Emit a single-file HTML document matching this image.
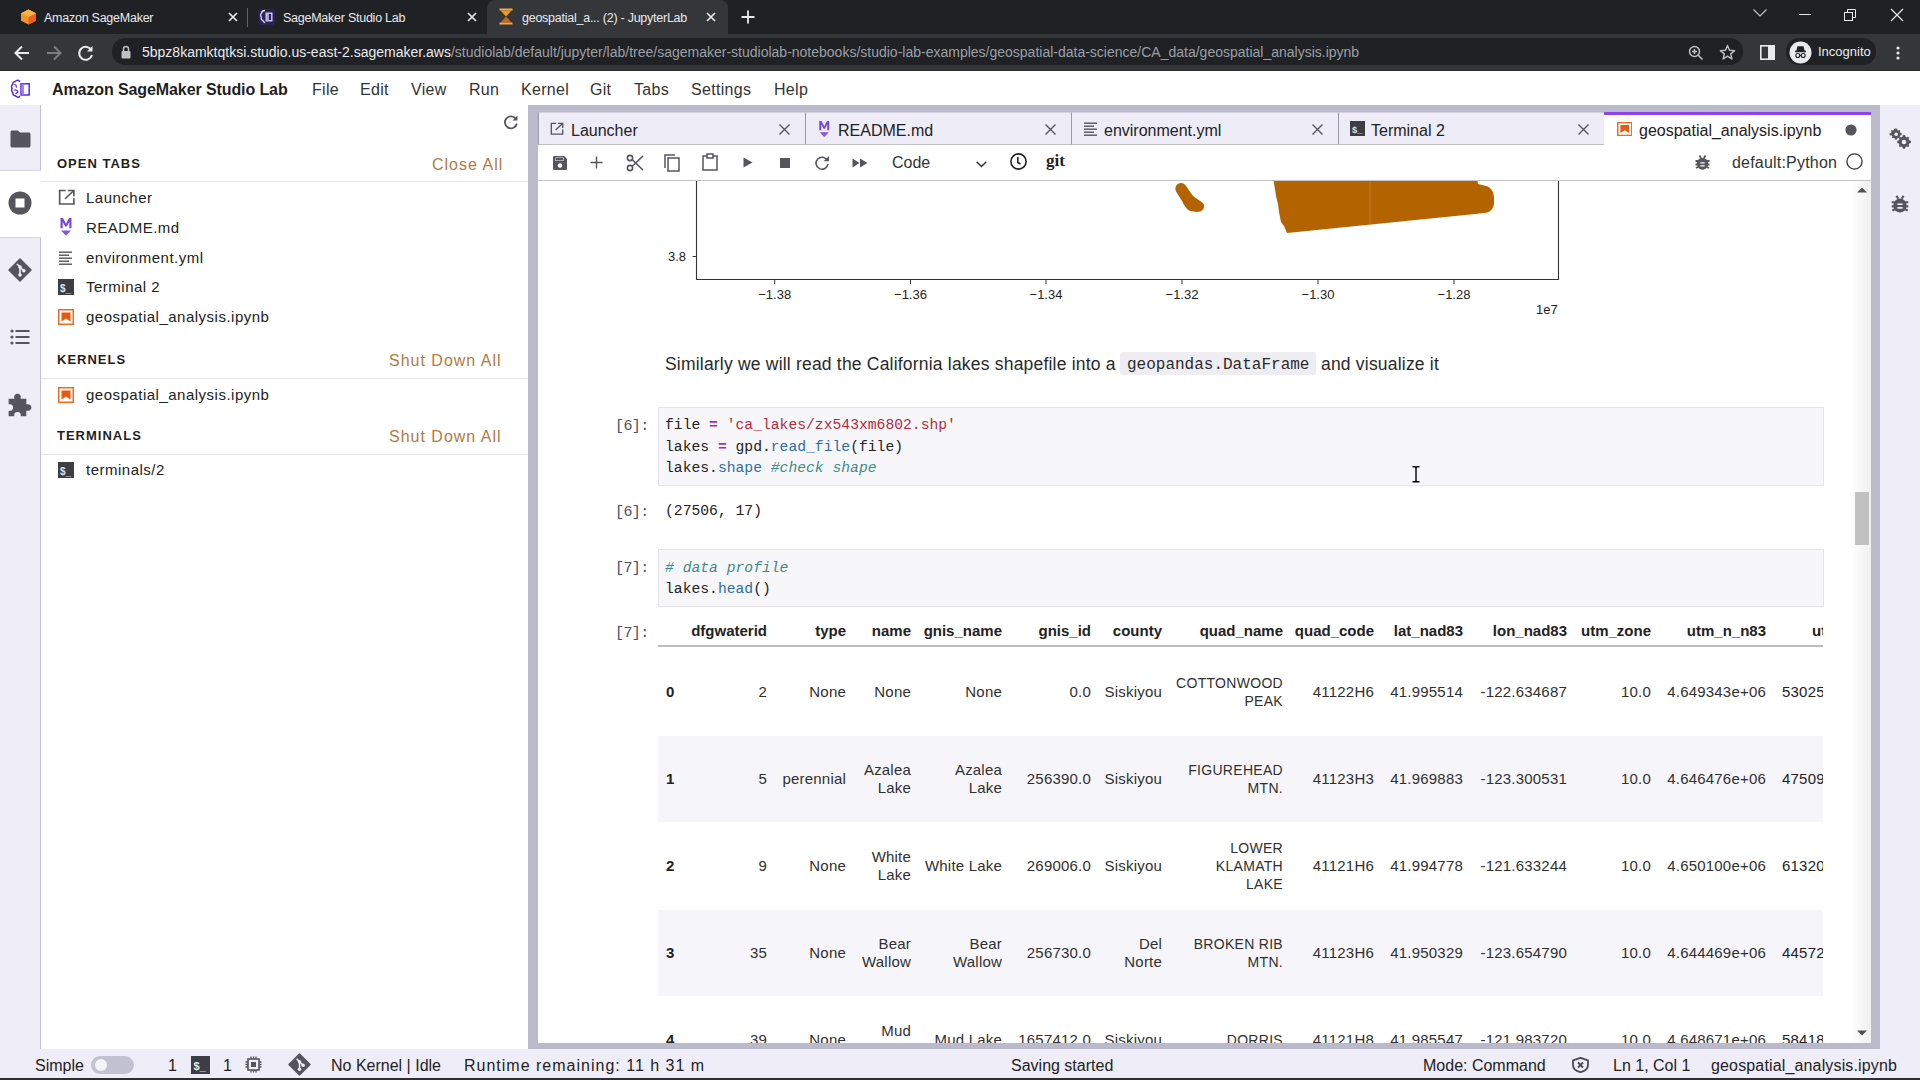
<!DOCTYPE html>
<html><head><meta charset="utf-8">
<style>
*{box-sizing:border-box;margin:0;padding:0}
html,body{width:1920px;height:1080px;overflow:hidden;background:#fff;font-family:"Liberation Sans",sans-serif;position:relative}
.a{position:absolute}
svg{display:block}
.mono{font-family:"Liberation Mono",monospace}
#tabstrip{left:0;top:0;width:1920px;height:34px;background:#202124}
#toolbar{left:0;top:34px;width:1920px;height:37px;background:#35363a;border-bottom:1.5px solid #29292c}
.ctab{top:1.5px;height:33px;color:#e8eaed;font-size:12.5px;letter-spacing:-0.25px;line-height:33px;white-space:nowrap}
#menubar{left:0;top:71px;width:1920px;height:34.5px;background:#fff;border-bottom:1px solid #b0b0b0}
.menu{top:0.8px;height:35px;line-height:36px;font-size:16px;color:#333;letter-spacing:0.3px}
#iconbar{left:0;top:105px;width:41px;height:944px;background:#efedf8;border-right:1px solid #c2c0ca}
#sidepanel{left:41px;top:105px;width:487px;height:943px;background:#fff}
#splitter{left:528px;top:105px;width:10px;height:943px;background:#bab9cc}
#mainarea{left:538px;top:105px;width:1340px;height:943px;background:#fff}
#rightbar{left:1878px;top:105px;width:42px;height:943px;background:#efedf8}
#statusbar{left:0;top:1048px;width:1920px;height:30px;background:#efedf8}
#bottomline{left:0;top:1078px;width:1920px;height:2px;background:#2e2e30}
</style></head><body>
<div id="tabstrip" class="a">
 <div class="a" style="left:20px;top:9px;width:16px;height:16px;">
  <svg width="17" height="16" viewBox="0 0 17 16"><path d="M8.5 0.5 L16 4.3 L16 11.7 L8.5 15.5 L1 11.7 L1 4.3Z" fill="#f7931e"/><path d="M8.5 8 L16 4.3 L16 11.7 L8.5 15.5Z" fill="#ec5f2a"/><path d="M1 4.3 L8.5 8 L16 4.3 L8.5 0.5Z" fill="#fbb04a"/></svg>
 </div>
 <div class="a ctab" style="left:44px;">Amazon SageMaker</div>
 <div class="a" style="left:228px;top:12px"><svg width="10" height="10" viewBox="0 0 10 10"><path d="M1 1L9 9M9 1L1 9" stroke="#e8eaed" stroke-width="1.7"/></svg></div>
 <div class="a" style="left:247px;top:8px;width:1px;height:19px;background:#5f6368"></div>
 <div class="a" style="left:258px;top:9px;width:17px;height:16px;">
  <svg width="17" height="16" viewBox="0 0 17 16"><rect x="0" y="0" width="17" height="16" rx="3" fill="#2a2450"/><path d="M7 1.5c-2 0-3.3 1.2-3.3 2.5 -1.3.6-1.5 3.2-.4 4 -.5 1.2 0 3 1.5 3.4 .3 1.3 1.2 2.1 2.4 2.1" stroke="#e0d6ff" stroke-width="1.3" fill="none"/><rect x="8.2" y="4.2" width="5.6" height="7.6" stroke="#e0d6ff" stroke-width="1.3" fill="none"/><rect x="9.2" y="5" width="1.6" height="6" fill="#c9b8ff"/></svg>
 </div>
 <div class="a ctab" style="left:283px;">SageMaker Studio Lab</div>
 <div class="a" style="left:467px;top:12px"><svg width="10" height="10" viewBox="0 0 10 10"><path d="M1 1L9 9M9 1L1 9" stroke="#e8eaed" stroke-width="1.7"/></svg></div>
 <div class="a" style="left:487px;top:0;width:241px;height:34px;background:#35363a;border-radius:8px 8px 0 0"></div>
 <div class="a" style="left:499px;top:8px;width:14px;height:17px;">
  <svg width="14" height="17" viewBox="0 0 14 17"><rect x="0.5" y="0.5" width="13" height="2" fill="#f5a94a"/><rect x="0.5" y="14.5" width="13" height="2" fill="#f5a94a"/><path d="M1.5 2.5 L12.5 2.5 L7 8.5 Z" fill="#f39c12"/><path d="M1.5 14.5 L7 8.5 L12.5 14.5Z" fill="#e8751a" opacity="0.8"/></svg>
 </div>
 <div class="a ctab" style="left:522px;">geospatial_a... (2) - JupyterLab</div>
 <div class="a" style="left:706px;top:12px"><svg width="10" height="10" viewBox="0 0 10 10"><path d="M1 1L9 9M9 1L1 9" stroke="#e8eaed" stroke-width="1.7"/></svg></div>
 <div class="a" style="left:740px;top:9px"><svg width="16" height="16" viewBox="0 0 16 16"><path d="M8 1.5V14.5M1.5 8H14.5" stroke="#e8eaed" stroke-width="1.8"/></svg></div>
 <div class="a" style="left:1752px;top:8px"><svg width="16" height="10" viewBox="0 0 16 10"><path d="M1.5 1.5L8 8L14.5 1.5" stroke="#c8c8c8" stroke-width="1.1" fill="none"/></svg></div>
 <div class="a" style="left:1799px;top:14px;width:12px;height:1px;background:#e8eaed"></div>
 <div class="a" style="left:1844px;top:9px"><svg width="12" height="12" viewBox="0 0 12 12"><rect x="0.5" y="3.5" width="8" height="8" stroke="#e8eaed" fill="none"/><path d="M3.5 3.5V0.5H11.5V8.5H8.5" stroke="#e8eaed" fill="none"/></svg></div>
 <div class="a" style="left:1890px;top:8px"><svg width="14" height="14" viewBox="0 0 14 14"><path d="M1 1L13 13M13 1L1 13" stroke="#e8eaed" stroke-width="1.2"/></svg></div>
</div>
<div id="toolbar" class="a">
 <div class="a" style="left:13px;top:10px"><svg width="18" height="18" viewBox="0 0 18 18"><path d="M16 9H3M9 2.5L2.5 9L9 15.5" stroke="#e8eaed" stroke-width="2" fill="none"/></svg></div>
 <div class="a" style="left:45px;top:10px"><svg width="18" height="18" viewBox="0 0 18 18"><path d="M2 9H15M9 2.5L15.5 9L9 15.5" stroke="#7a7c80" stroke-width="2" fill="none"/></svg></div>
 <div class="a" style="left:77px;top:10px"><svg width="18" height="18" viewBox="0 0 18 18"><path d="M14.6 6.5A6.5 6.5 0 1 0 15 11" stroke="#e8eaed" stroke-width="2" fill="none"/><path d="M15.5 2V7.5H10Z" fill="#e8eaed"/></svg></div>
 <div class="a" style="left:112px;top:4.3px;width:1631px;height:26.5px;background:#202124;border-radius:13px"></div>
 <div class="a" style="left:1786px;top:4.3px;width:90px;height:26.5px;background:#202124;border-radius:13px"></div>
 <div class="a" style="left:121px;top:11px"><svg width="10" height="14" viewBox="0 0 10 14"><path d="M2.5 6V4A2.5 2.5 0 0 1 7.5 4V6" stroke="#bdc1c6" stroke-width="1.5" fill="none"/><rect x="0.5" y="6" width="9" height="7.5" rx="1" fill="#bdc1c6"/></svg></div>
 <div class="a" style="left:142px;top:5px;height:26px;line-height:26px;font-size:14px;color:#e8eaed;white-space:nowrap">5bpz8kamktqtksi.studio.us-east-2.sagemaker.aws<span style="color:#9aa0a6">/studiolab/default/jupyter/lab/tree/sagemaker-studiolab-notebooks/studio-lab-examples/geospatial-data-science/CA_data/geospatial_analysis.ipynb</span></div>
 <div class="a" style="left:1688px;top:11px"><svg width="16" height="16" viewBox="0 0 16 16"><circle cx="6.5" cy="6.5" r="5" stroke="#bdc1c6" stroke-width="1.5" fill="none"/><path d="M10 10L14.5 14.5M6.5 4V9M4 6.5H9" stroke="#bdc1c6" stroke-width="1.5"/></svg></div>
 <div class="a" style="left:1719px;top:10px"><svg width="17" height="17" viewBox="0 0 17 17"><path d="M8.5 1.5L10.5 6.3L15.6 6.6L11.7 9.9L12.9 15L8.5 12.2L4.1 15L5.3 9.9L1.4 6.6L6.5 6.3Z" stroke="#bdc1c6" stroke-width="1.4" fill="none" stroke-linejoin="round"/></svg></div>
 <div class="a" style="left:1760px;top:11px"><svg width="15" height="15" viewBox="0 0 15 15"><rect x="0.8" y="0.8" width="13.4" height="13.4" stroke="#e8eaed" stroke-width="1.6" fill="none"/><rect x="8" y="1" width="6" height="13" fill="#e8eaed"/></svg></div>
 <div class="a" style="left:1789px;top:7px"><svg width="23" height="23" viewBox="0 0 23 23"><circle cx="11.5" cy="11.5" r="11" fill="#e8eaed"/><path d="M6 10.5H17M8 10L9 6H14L15 10" stroke="#202124" stroke-width="1.3" fill="#202124"/><circle cx="8.8" cy="14.5" r="2" stroke="#202124" stroke-width="1.1" fill="none"/><circle cx="14.2" cy="14.5" r="2" stroke="#202124" stroke-width="1.1" fill="none"/><path d="M10.8 14.5H12.2" stroke="#202124" stroke-width="1"/></svg></div>
 <div class="a" style="left:1818px;top:5px;height:26px;line-height:26px;font-size:13px;color:#e8eaed">Incognito</div>
 <div class="a" style="left:1896px;top:12px"><svg width="4" height="14" viewBox="0 0 4 14"><circle cx="2" cy="2" r="1.6" fill="#e8eaed"/><circle cx="2" cy="7" r="1.6" fill="#e8eaed"/><circle cx="2" cy="12" r="1.6" fill="#e8eaed"/></svg></div>
</div>
<div id="menubar" class="a">
 <div class="a" style="left:10px;top:8px"><svg width="21" height="20" viewBox="0 0 21 20"><path d="M9.5 2.2C8 1 6.2 1.3 5.2 2.5 3.6 2.6 2.6 3.8 2.7 5.3 1.3 6.3 1.2 8.3 2.2 9.4 1.2 10.8 1.5 12.8 2.8 13.6 2.7 15.3 3.9 16.6 5.5 16.7 6.4 18.2 8.3 18.6 9.5 17.6" stroke="#5a2ee6" stroke-width="1.5" fill="none" stroke-linecap="round"/><path d="M5 5.5C6 6 6.5 7 6.3 8M4.5 11C5.8 10.6 7 11 7.6 12M6 14.5L8 13" stroke="#5a2ee6" stroke-width="1.3" fill="none" stroke-linecap="round"/><rect x="11" y="4.8" width="8.2" height="11.2" stroke="#5a2ee6" stroke-width="1.5" fill="none"/><rect x="11.6" y="5.5" width="2.4" height="10" fill="#b27cff"/></svg></div>
 <div class="a" style="left:52px;top:1px;height:35px;line-height:36px;font-size:16px;font-weight:bold;color:#1f1f1f;letter-spacing:-0.1px">Amazon SageMaker Studio Lab</div>
 <div class="a menu" style="left:312px">File</div>
 <div class="a menu" style="left:360px">Edit</div>
 <div class="a menu" style="left:411px">View</div>
 <div class="a menu" style="left:469px">Run</div>
 <div class="a menu" style="left:521px">Kernel</div>
 <div class="a menu" style="left:590px">Git</div>
 <div class="a menu" style="left:634px">Tabs</div>
 <div class="a menu" style="left:691px">Settings</div>
 <div class="a menu" style="left:774px">Help</div>
</div>
<div id="iconbar" class="a">
 <div class="a" style="left:0;top:65px;width:41px;height:1px;background:#d8d7e2"></div><div class="a" style="left:0;top:66px;width:41px;height:66px;background:#fff"></div><div class="a" style="left:0;top:132px;width:41px;height:1px;background:#d8d7e2"></div>
 <div class="a" style="left:9.5px;top:25px"><svg width="21" height="18" viewBox="0 0 21 18"><path d="M0.5 2C0.5 1.2 1.2 0.5 2 0.5H8L10 2.5H19C19.8 2.5 20.5 3.2 20.5 4V16C20.5 16.8 19.8 17.5 19 17.5H2C1.2 17.5 0.5 16.8 0.5 16Z" fill="#56555d"/></svg></div>
 <div class="a" style="left:8px;top:86px"><svg width="24" height="24" viewBox="0 0 24 24"><circle cx="12" cy="12" r="11.5" fill="#56555d"/><rect x="7.5" y="7.5" width="9" height="9" fill="#fff"/></svg></div>
 <div class="a" style="left:8px;top:153px"><svg width="24" height="24" viewBox="0 0 24 24"><path d="M12 1L23 12L12 23L1 12Z" fill="#56555d" stroke="#56555d" stroke-width="1.5" stroke-linejoin="round"/><path d="M9 6L15.5 12.5" stroke="#efedf8" stroke-width="1.6"/><path d="M12 9.5V17" stroke="#efedf8" stroke-width="1.6"/><circle cx="12" cy="9" r="1.8" fill="#efedf8"/><circle cx="12" cy="17" r="1.8" fill="#efedf8"/><circle cx="15.8" cy="12.8" r="1.8" fill="#efedf8"/></svg></div>
 <div class="a" style="left:10px;top:224px"><svg width="20" height="16" viewBox="0 0 20 16"><circle cx="2" cy="2" r="1.6" fill="#56555d"/><circle cx="2" cy="8" r="1.6" fill="#56555d"/><circle cx="2" cy="14" r="1.6" fill="#56555d"/><rect x="5.5" y="1" width="14" height="2" fill="#56555d"/><rect x="5.5" y="7" width="14" height="2" fill="#56555d"/><rect x="5.5" y="13" width="14" height="2" fill="#56555d"/></svg></div>
 <div class="a" style="left:8px;top:288px"><svg width="24" height="24" viewBox="1.5 1.5 19 19"><path d="M2 6H6.5C6 4 6.8 2 9 2S12 4 11.5 6H16V10.5C18 10 20 10.8 20 13S18 16 16 15.5V20H11.5C12 18 11.2 16.5 9 16.5S6 18 6.5 20H2V15.5C4 16 5.5 15.2 5.5 13S4 10 2 10.5Z" fill="#56555d"/></svg></div>
</div>
<div id="sidepanel" class="a">
<div class="a" style="left:462px;top:9px;"><svg width="16" height="16" viewBox="0 0 16 16"><path d="M13.2 5.5A6 6 0 1 0 13.8 9.5" stroke="#56555d" stroke-width="1.8" fill="none"/><path d="M14.5 1.5V6.5H9.5Z" fill="#56555d"/></svg></div>
<div class="a" style="left:16px;top:51px;font-size:13px;font-weight:bold;letter-spacing:1px;color:#1f1f1f;line-height:16px">OPEN TABS</div>
<div class="a" style="left:391px;top:51px;font-size:16px;letter-spacing:1px;color:#b57a40;line-height:18px;white-space:nowrap">Close All</div>
<div class="a" style="left:0;top:76px;width:487px;height:1px;background:#e3e3e8"></div>
<div class="a" style="left:16.5px;top:83.5px;"><svg width="17.5" height="16.5" viewBox="0 0 16 16" preserveAspectRatio="none"><path d="M7 1.5H1.5V14.5H14.5V9" stroke="#56555d" stroke-width="1.5" fill="none"/><path d="M6.5 9.5L14 2M9 1.5H14.5V7" stroke="#56555d" stroke-width="1.5" fill="none"/></svg></div>
<div class="a" style="left:45px;top:84px;font-size:15px;letter-spacing:0.5px;color:#222;white-space:nowrap;line-height:18px">Launcher</div>
<div class="a" style="left:17px;top:112.8px;"><svg width="16" height="18" viewBox="0 0 16 18"><path d="M2.5 10.2V0H5L8 5.8L11 0H13.5V10.2H11.3V4L8.8 8.6H7.2L4.7 4V10.2Z" fill="#7a48d6"/><path d="M3 12.5H13L8 17.7Z" fill="#8752e6"/></svg></div>
<div class="a" style="left:45px;top:114px;font-size:15px;letter-spacing:0.5px;color:#222;white-space:nowrap;line-height:18px">README.md</div>
<div class="a" style="left:17px;top:144.5px;"><svg width="16" height="16" viewBox="0 0 16 16"><rect x="1" y="1.5" width="13" height="1.4" fill="#56555d"/><rect x="1" y="4.5" width="10" height="1.4" fill="#56555d"/><rect x="1" y="7.5" width="13" height="1.4" fill="#56555d"/><rect x="1" y="10.5" width="10" height="1.4" fill="#56555d"/><rect x="1" y="13.5" width="13" height="1.4" fill="#56555d"/></svg></div>
<div class="a" style="left:45px;top:144px;font-size:15px;letter-spacing:0.5px;color:#222;white-space:nowrap;line-height:18px">environment.yml</div>
<div class="a" style="left:17px;top:173.5px;"><svg width="16" height="16" viewBox="0 0 16 16"><rect x="0" y="0" width="16" height="16" fill="#3d3d45"/><text x="2" y="12.5" font-family="Liberation Sans" font-size="10" fill="#e0e0e0" font-weight="bold">$_</text></svg></div>
<div class="a" style="left:45px;top:173px;font-size:15px;letter-spacing:0.5px;color:#222;white-space:nowrap;line-height:18px">Terminal 2</div>
<div class="a" style="left:17px;top:203.5px;"><svg width="16" height="16" viewBox="0 0 16 16"><rect x="0.75" y="0.75" width="14.5" height="14.5" stroke="#ef6c1a" stroke-width="1.5" fill="#fff"/><path d="M3.5 3.5H12.5V12.5L8 9.5L3.5 12.5Z" fill="#e55a12"/></svg></div>
<div class="a" style="left:45px;top:203px;font-size:15px;letter-spacing:0.5px;color:#222;white-space:nowrap;line-height:18px">geospatial_analysis.ipynb</div>
<div class="a" style="left:16px;top:247px;font-size:13px;font-weight:bold;letter-spacing:1px;color:#1f1f1f;line-height:16px">KERNELS</div>
<div class="a" style="left:348px;top:247px;font-size:16px;letter-spacing:1px;color:#b57a40;line-height:18px;white-space:nowrap">Shut Down All</div>
<div class="a" style="left:0;top:273px;width:487px;height:1px;background:#e3e3e8"></div>
<div class="a" style="left:17px;top:281.5px;"><svg width="16" height="16" viewBox="0 0 16 16"><rect x="0.75" y="0.75" width="14.5" height="14.5" stroke="#ef6c1a" stroke-width="1.5" fill="#fff"/><path d="M3.5 3.5H12.5V12.5L8 9.5L3.5 12.5Z" fill="#e55a12"/></svg></div>
<div class="a" style="left:45px;top:281px;font-size:15px;letter-spacing:0.5px;color:#222;white-space:nowrap;line-height:18px">geospatial_analysis.ipynb</div>
<div class="a" style="left:16px;top:323px;font-size:13px;font-weight:bold;letter-spacing:1px;color:#1f1f1f;line-height:16px">TERMINALS</div>
<div class="a" style="left:348px;top:323px;font-size:16px;letter-spacing:1px;color:#b57a40;line-height:18px;white-space:nowrap">Shut Down All</div>
<div class="a" style="left:0;top:349px;width:487px;height:1px;background:#e3e3e8"></div>
<div class="a" style="left:17px;top:356.5px;"><svg width="16" height="16" viewBox="0 0 16 16"><rect x="0" y="0" width="16" height="16" fill="#3d3d45"/><text x="2" y="12.5" font-family="Liberation Sans" font-size="10" fill="#e0e0e0" font-weight="bold">$_</text></svg></div>
<div class="a" style="left:45px;top:356px;font-size:15px;letter-spacing:0.5px;color:#222;white-space:nowrap;line-height:18px">terminals/2</div>
</div>
<div id="mainarea" class="a" style="left:528px;top:105px;width:1352px;height:945px;background:#bbbacb;overflow:hidden">
<div class="a" style="left:10px;top:7px;width:1333px;height:931px;background:#fff"></div>
<div class="a" style="left:10px;top:7px;width:268px;background:#eeecf7;height:33px;border:1px solid #d3d2de;border-left-color:#9c9baa;border-right-color:#9c9baa;border-bottom:1px solid #c0c0c8"></div>
<div class="a" style="left:22px;top:17px;"><svg width="14" height="13.5" viewBox="0 0 16 16" preserveAspectRatio="none"><path d="M7 1.5H1.5V14.5H14.5V9" stroke="#56555d" stroke-width="1.5" fill="none"/><path d="M6.5 9.5L14 2M9 1.5H14.5V7" stroke="#56555d" stroke-width="1.5" fill="none"/></svg></div>
<div class="a" style="left:43px;top:17px;font-size:16px;color:#222;line-height:18px;white-space:nowrap">Launcher</div>
<div class="a" style="left:250.5px;top:18.5px"><svg width="11" height="11" viewBox="0 0 11 11"><path d="M0.5 0.5L10.5 10.5M10.5 0.5L0.5 10.5" stroke="#56555d" stroke-width="1.4"/></svg></div>
<div class="a" style="left:277px;top:7px;width:267px;background:#eeecf7;height:33px;border:1px solid #d3d2de;border-left-color:#9c9baa;border-right-color:#9c9baa;border-bottom:1px solid #c0c0c8"></div>
<div class="a" style="left:288.5px;top:15.5px;"><svg width="14.5" height="16.3" viewBox="0 0 16 18"><path d="M2.5 10.2V0H5L8 5.8L11 0H13.5V10.2H11.3V4L8.8 8.6H7.2L4.7 4V10.2Z" fill="#7a48d6"/><path d="M3 12.5H13L8 17.7Z" fill="#8752e6"/></svg></div>
<div class="a" style="left:310px;top:17px;font-size:16px;color:#222;line-height:18px;white-space:nowrap">README.md</div>
<div class="a" style="left:516.5px;top:18.5px"><svg width="11" height="11" viewBox="0 0 11 11"><path d="M0.5 0.5L10.5 10.5M10.5 0.5L0.5 10.5" stroke="#56555d" stroke-width="1.4"/></svg></div>
<div class="a" style="left:543px;top:7px;width:268px;background:#eeecf7;height:33px;border:1px solid #d3d2de;border-left-color:#9c9baa;border-right-color:#9c9baa;border-bottom:1px solid #c0c0c8"></div>
<div class="a" style="left:555px;top:15.5px;"><svg width="16" height="16" viewBox="0 0 16 16"><rect x="1" y="1.5" width="13" height="1.4" fill="#56555d"/><rect x="1" y="4.5" width="10" height="1.4" fill="#56555d"/><rect x="1" y="7.5" width="13" height="1.4" fill="#56555d"/><rect x="1" y="10.5" width="10" height="1.4" fill="#56555d"/><rect x="1" y="13.5" width="13" height="1.4" fill="#56555d"/></svg></div>
<div class="a" style="left:576px;top:17px;font-size:16px;color:#222;line-height:18px;white-space:nowrap">environment.yml</div>
<div class="a" style="left:783.5px;top:18.5px"><svg width="11" height="11" viewBox="0 0 11 11"><path d="M0.5 0.5L10.5 10.5M10.5 0.5L0.5 10.5" stroke="#56555d" stroke-width="1.4"/></svg></div>
<div class="a" style="left:810px;top:7px;width:267px;background:#eeecf7;height:33px;border:1px solid #d3d2de;border-left-color:#9c9baa;border-right-color:#9c9baa;border-bottom:1px solid #c0c0c8"></div>
<div class="a" style="left:822px;top:16px;"><svg width="15" height="15" viewBox="0 0 16 16"><rect x="0" y="0" width="16" height="16" fill="#3d3d45"/><text x="2" y="12.5" font-family="Liberation Sans" font-size="10" fill="#e0e0e0" font-weight="bold">$_</text></svg></div>
<div class="a" style="left:843px;top:17px;font-size:16px;color:#222;line-height:18px;white-space:nowrap">Terminal 2</div>
<div class="a" style="left:1049.5px;top:18.5px"><svg width="11" height="11" viewBox="0 0 11 11"><path d="M0.5 0.5L10.5 10.5M10.5 0.5L0.5 10.5" stroke="#56555d" stroke-width="1.4"/></svg></div>
<div class="a" style="left:1076px;top:7px;width:267px;height:34px;background:#fff;border-top:3.5px solid #8e44ec"></div>
<div class="a" style="left:1088.5px;top:17px;"><svg width="15.5" height="14" viewBox="0 0 16 16" preserveAspectRatio="none"><rect x="0.75" y="0.75" width="14.5" height="14.5" stroke="#ef6c1a" stroke-width="1.5" fill="#fff"/><path d="M3.5 3.5H12.5V12.5L8 9.5L3.5 12.5Z" fill="#e55a12"/></svg></div>
<div class="a" style="left:1111px;top:17px;font-size:16px;color:#222;line-height:18px;white-space:nowrap">geospatial_analysis.ipynb</div>
<div class="a" style="left:1317px;top:19px;"><svg width="12" height="12"><circle cx="6" cy="6" r="5.6" fill="#56555d"/></svg></div>
<div class="a" style="left:10px;top:40px;width:1333px;height:36px;background:#fff;border-bottom:1px solid #c4c4c8"></div>
<div class="a" style="left:24px;top:50px;"><svg width="16" height="16" viewBox="0 0 16 16"><path d="M1 2.5C1 1.7 1.7 1 2.5 1H12L15 4V13.5C15 14.3 14.3 15 13.5 15H2.5C1.7 15 1 14.3 1 13.5Z" fill="#56555d"/><rect x="3.5" y="2.5" width="8" height="3.5" fill="#fff"/><rect x="4" y="3" width="7" height="2.5" fill="#56555d"/><circle cx="8" cy="10.5" r="2.3" fill="#fff"/></svg></div>
<div class="a" style="left:62px;top:51px;"><svg width="13" height="13" viewBox="0 0 13 13"><path d="M6.5 0.5V12.5M0.5 6.5H12.5" stroke="#56555d" stroke-width="1.4"/></svg></div>
<div class="a" style="left:98px;top:49px;"><svg width="18" height="18" viewBox="0 0 18 18"><circle cx="4" cy="4" r="2.6" stroke="#56555d" stroke-width="1.6" fill="none"/><circle cx="4" cy="14" r="2.6" stroke="#56555d" stroke-width="1.6" fill="none"/><path d="M6 5.5L17 16M6 12.5L17 2" stroke="#56555d" stroke-width="1.6"/></svg></div>
<div class="a" style="left:136px;top:49px;"><svg width="16" height="18" viewBox="0 0 16 18"><path d="M1 14V1H11" stroke="#56555d" stroke-width="1.5" fill="none"/><rect x="4" y="4" width="11" height="13" stroke="#56555d" stroke-width="1.5" fill="none"/></svg></div>
<div class="a" style="left:174px;top:48px;"><svg width="16" height="18" viewBox="0 0 16 18"><rect x="1" y="3" width="14" height="14" stroke="#56555d" stroke-width="1.5" fill="none"/><rect x="5" y="1" width="6" height="4" stroke="#56555d" stroke-width="1.5" fill="#fff"/></svg></div>
<div class="a" style="left:215px;top:52px;"><svg width="10" height="11" viewBox="0 0 10 11"><path d="M0.5 0.5L9.5 5.5L0.5 10.5Z" fill="#56555d"/></svg></div>
<div class="a" style="left:252px;top:53px;"><svg width="10" height="10"><rect width="10" height="10" fill="#56555d"/></svg></div>
<div class="a" style="left:287px;top:49px;"><svg width="15" height="17" viewBox="0 0 15 17"><path d="M12.4 6.5A6 6 0 1 0 13 10" stroke="#56555d" stroke-width="1.6" fill="none"/><path d="M14 2V7.3H8.7Z" fill="#56555d"/></svg></div>
<div class="a" style="left:324px;top:53px;"><svg width="16" height="10" viewBox="0 0 16 10"><path d="M0.5 0.5L7.5 5L0.5 9.5ZM8 0.5L15.5 5L8 9.5Z" fill="#56555d"/></svg></div>
<div class="a" style="left:448px;top:56px;"><svg width="11" height="7" viewBox="0 0 11 7"><path d="M0.7 0.7L5.5 5.5L10.3 0.7" stroke="#333" stroke-width="1.4" fill="none"/></svg></div>
<div class="a" style="left:482px;top:48px;"><svg width="17" height="17" viewBox="0 0 17 17"><circle cx="8.5" cy="8.5" r="7.6" stroke="#222" stroke-width="1.6" fill="none"/><path d="M7.8 4V9.5L10.5 11" stroke="#222" stroke-width="1.6" fill="none"/></svg></div>
<div class="a" style="left:364px;top:48.5px;font-size:16px;color:#333;line-height:18px">Code</div>
<div class="a" style="left:518px;top:47px;font-family:Liberation Serif;font-weight:bold;font-size:17px;color:#222;line-height:18px">git</div>
<div class="a" style="left:1166px;top:49px;"><svg width="17" height="17" viewBox="0 0 17 17"><ellipse cx="8.5" cy="9.8" rx="5.6" ry="6" fill="#56555d"/><path d="M5.5 1.5L7 4M11.5 1.5L10 4" stroke="#56555d" stroke-width="1.8"/><path d="M1.5 7H4M15.5 7H13M1.5 10.5H4M15.5 10.5H13M2 14L4.2 13M15 14L12.8 13" stroke="#56555d" stroke-width="1.8"/><path d="M6.3 8.8H10.7M6.3 11.8H10.7" stroke="#fff" stroke-width="1.3"/></svg></div>
<div class="a" style="left:1204px;top:48.5px;font-size:16px;color:#333;line-height:18px;letter-spacing:0.2px">default:Python</div>
<div class="a" style="left:1318px;top:48px;"><svg width="17" height="17"><circle cx="8.5" cy="8.5" r="7.6" stroke="#333" stroke-width="1.3" fill="none"/></svg></div>
<div class="a" style="left:10px;top:76px;width:1315px;height:862px;overflow:hidden;"><svg width="1000" height="160" viewBox="600 170 1000 160" style="position:absolute;left:62px;top:-11px">
<path d="M1176 186 C1178 182 1184 182 1186 186 L1193 196 L1203 203 C1206 207 1203 212 1197 212 L1190 211 C1186 209 1184 205 1182 201 L1177 193 C1175 190 1175 188 1176 186Z" fill="#b36400"/>
<path d="M1272 170 L1476 170 L1478 184 L1486 186 C1491 187 1494 192 1494 198 L1494 204 C1493 210 1489 213 1484 213 L1475 214 L1287 233 L1284 226 L1281 222 L1279 212 L1278 204 L1276 196 Z" fill="#b36400"/>
<path d="M1370 181 V224" stroke="#c98a3c" stroke-width="1" opacity="0.6"/>
<path d="M696.5 170 V279.5 H1558.5 V170" stroke="#333" stroke-width="1.1" fill="none"/>
<path d="M692.5 256.5 H696.5" stroke="#333" stroke-width="1"/>
<path d="M774.7 279.5V284M910.5 279.5V284M1046 279.5V284M1182 279.5V284M1318 279.5V284M1454 279.5V284" stroke="#333" stroke-width="1"/>
</svg>
<div class="a" style="left:130px;top:69px;font-size:13px;color:#222;line-height:14px;white-space:nowrap">3.8</div>
<div class="a" style="left:206.70000000000005px;top:107px;font-size:13px;color:#222;line-height:14px;white-space:nowrap;width:60px;text-align:center">−1.38</div>
<div class="a" style="left:342.5px;top:107px;font-size:13px;color:#222;line-height:14px;white-space:nowrap;width:60px;text-align:center">−1.36</div>
<div class="a" style="left:478px;top:107px;font-size:13px;color:#222;line-height:14px;white-space:nowrap;width:60px;text-align:center">−1.34</div>
<div class="a" style="left:614px;top:107px;font-size:13px;color:#222;line-height:14px;white-space:nowrap;width:60px;text-align:center">−1.32</div>
<div class="a" style="left:750px;top:107px;font-size:13px;color:#222;line-height:14px;white-space:nowrap;width:60px;text-align:center">−1.30</div>
<div class="a" style="left:886px;top:107px;font-size:13px;color:#222;line-height:14px;white-space:nowrap;width:60px;text-align:center">−1.28</div>
<div class="a" style="left:998px;top:122px;font-size:13px;color:#222;line-height:14px;white-space:nowrap">1e7</div>
<div class="a" style="left:582px;top:171px;width:196px;height:23px;background:#eeeef2;border-radius:2px"></div>
<div class="a" style="left:127px;top:173px;font-size:17.5px;color:#2a2a2a;letter-spacing:0.2px;line-height:20px;white-space:nowrap">Similarly we will read the California lakes shapefile into a</div><div class="a mono" style="left:589px;top:174px;font-size:16px;color:#2a2a2a;line-height:20px;white-space:nowrap">geopandas.DataFrame</div><div class="a" style="left:783px;top:173px;font-size:17.5px;color:#2a2a2a;letter-spacing:0.2px;line-height:20px;white-space:nowrap">and visualize it</div>
<div class="a" style="left:120px;top:226px;width:1166px;height:79px;background:#f7f7fa;border:1px solid #e4e4ea"></div>
<div class="a" style="left:77px;top:238px;font-family:Liberation Mono;font-size:15px;letter-spacing:-0.6px;color:#50505c;line-height:15px">[6]:</div>
<div class="a" style="left:127px;top:233.8px;font-family:Liberation Mono;font-size:14.7px;color:#222;line-height:21.8px;white-space:pre">file <span style="color:#9b2fc9;font-weight:bold">=</span> <span style="color:#b22b3a">'ca_lakes/zx543xm6802.shp'</span>
lakes <span style="color:#9b2fc9;font-weight:bold">=</span> gpd.<span style="color:#2f6fa5">read_file</span>(file)
lakes.<span style="color:#2f6fa5">shape</span> <span style="color:#3f8a84;font-style:italic">#check shape</span></div>
<div class="a" style="left:77px;top:324px;font-family:Liberation Mono;font-size:15px;letter-spacing:-0.6px;color:#50505c;line-height:15px">[6]:</div>
<div class="a" style="left:127px;top:320px;font-family:Liberation Mono;font-size:14.7px;color:#222;line-height:21.8px;white-space:pre">(27506, 17)</div>
<div class="a" style="left:120px;top:368px;width:1166px;height:58px;background:#f7f7fa;border:1px solid #e4e4ea"></div>
<div class="a" style="left:77px;top:380px;font-family:Liberation Mono;font-size:15px;letter-spacing:-0.6px;color:#50505c;line-height:15px">[7]:</div>
<div class="a" style="left:127px;top:376.5px;font-family:Liberation Mono;font-size:14.7px;color:#222;line-height:21.8px;white-space:pre"><span style="color:#3f8a84;font-style:italic"># data profile</span>
lakes.<span style="color:#2f6fa5">head</span>()</div>
<div class="a" style="left:77px;top:444.5px;font-family:Liberation Mono;font-size:15px;letter-spacing:-0.6px;color:#50505c;line-height:15px">[7]:</div><div class="a" style="left:0;top:0;width:1285px;height:862px;overflow:hidden"><div class="a" style="left:120px;top:464px;width:1166px;height:2px;background:#bdbdbd"></div>
<div class="a" style="left:120px;top:555px;width:1166px;height:86px;background:#f6f6fa"></div>
<div class="a" style="left:120px;top:729px;width:1166px;height:86px;background:#f6f6fa"></div>
<div class="a" style="left:29px;top:441.0px;font-size:15px;font-weight:bold;color:#222;line-height:18px;white-space:nowrap;text-align:right;width:200px">dfgwaterid</div>
<div class="a" style="left:108px;top:441.0px;font-size:15px;font-weight:bold;color:#222;line-height:18px;white-space:nowrap;text-align:right;width:200px">type</div>
<div class="a" style="left:173px;top:441.0px;font-size:15px;font-weight:bold;color:#222;line-height:18px;white-space:nowrap;text-align:right;width:200px">name</div>
<div class="a" style="left:264px;top:441.0px;font-size:15px;font-weight:bold;color:#222;line-height:18px;white-space:nowrap;text-align:right;width:200px">gnis_name</div>
<div class="a" style="left:353px;top:441.0px;font-size:15px;font-weight:bold;color:#222;line-height:18px;white-space:nowrap;text-align:right;width:200px">gnis_id</div>
<div class="a" style="left:424px;top:441.0px;font-size:15px;font-weight:bold;color:#222;line-height:18px;white-space:nowrap;text-align:right;width:200px">county</div>
<div class="a" style="left:545px;top:441.0px;font-size:15px;font-weight:bold;color:#222;line-height:18px;white-space:nowrap;text-align:right;width:200px">quad_name</div>
<div class="a" style="left:636px;top:441.0px;font-size:15px;font-weight:bold;color:#222;line-height:18px;white-space:nowrap;text-align:right;width:200px">quad_code</div>
<div class="a" style="left:725px;top:441.0px;font-size:15px;font-weight:bold;color:#222;line-height:18px;white-space:nowrap;text-align:right;width:200px">lat_nad83</div>
<div class="a" style="left:829px;top:441.0px;font-size:15px;font-weight:bold;color:#222;line-height:18px;white-space:nowrap;text-align:right;width:200px">lon_nad83</div>
<div class="a" style="left:913px;top:441.0px;font-size:15px;font-weight:bold;color:#222;line-height:18px;white-space:nowrap;text-align:right;width:200px">utm_zone</div>
<div class="a" style="left:1028px;top:441.0px;font-size:15px;font-weight:bold;color:#222;line-height:18px;white-space:nowrap;text-align:right;width:200px">utm_n_n83</div>
<div class="a" style="left:1274px;top:441px;font-size:15px;font-weight:bold;color:#222;line-height:18px;white-space:nowrap;text-align:left">utm_e_n83</div>
<div class="a" style="left:128px;top:502px;font-size:15px;font-weight:bold;color:#222;line-height:18px">0</div>
<div class="a" style="left:29px;top:502.0px;font-size:15px;color:#303030;line-height:18px;white-space:nowrap;text-align:right;letter-spacing:0.2px;width:200px">2</div>
<div class="a" style="left:108px;top:502.0px;font-size:15px;color:#303030;line-height:18px;white-space:nowrap;text-align:right;letter-spacing:0.2px;width:200px">None</div>
<div class="a" style="left:173px;top:502.0px;font-size:15px;color:#303030;line-height:18px;white-space:nowrap;text-align:right;letter-spacing:0.2px;width:200px">None</div>
<div class="a" style="left:264px;top:502.0px;font-size:15px;color:#303030;line-height:18px;white-space:nowrap;text-align:right;letter-spacing:0.2px;width:200px">None</div>
<div class="a" style="left:353px;top:502.0px;font-size:15px;color:#303030;line-height:18px;white-space:nowrap;text-align:right;letter-spacing:0.2px;width:200px">0.0</div>
<div class="a" style="left:424px;top:502.0px;font-size:15px;color:#303030;line-height:18px;white-space:nowrap;text-align:right;letter-spacing:0.2px;width:200px">Siskiyou</div>
<div class="a" style="left:545px;top:493.0px;font-size:14px;color:#303030;line-height:18px;white-space:nowrap;text-align:right;letter-spacing:0.3px;width:200px">COTTONWOOD<br>PEAK</div>
<div class="a" style="left:636px;top:502.0px;font-size:15px;color:#303030;line-height:18px;white-space:nowrap;text-align:right;letter-spacing:0.2px;width:200px">41122H6</div>
<div class="a" style="left:725px;top:502.0px;font-size:15px;color:#303030;line-height:18px;white-space:nowrap;text-align:right;letter-spacing:0.2px;width:200px">41.995514</div>
<div class="a" style="left:829px;top:502.0px;font-size:15px;color:#303030;line-height:18px;white-space:nowrap;text-align:right;letter-spacing:0.2px;width:200px">-122.634687</div>
<div class="a" style="left:913px;top:502.0px;font-size:15px;color:#303030;line-height:18px;white-space:nowrap;text-align:right;letter-spacing:0.2px;width:200px">10.0</div>
<div class="a" style="left:1028px;top:502.0px;font-size:15px;color:#303030;line-height:18px;white-space:nowrap;text-align:right;letter-spacing:0.2px;width:200px">4.649343e+06</div>
<div class="a" style="left:1244px;top:502px;font-size:15px;color:#222;line-height:18px;white-space:nowrap;text-align:left;letter-spacing:0.2px">530257.0</div>
<div class="a" style="left:128px;top:589px;font-size:15px;font-weight:bold;color:#222;line-height:18px">1</div>
<div class="a" style="left:29px;top:589.0px;font-size:15px;color:#303030;line-height:18px;white-space:nowrap;text-align:right;letter-spacing:0.2px;width:200px">5</div>
<div class="a" style="left:108px;top:589.0px;font-size:15px;color:#303030;line-height:18px;white-space:nowrap;text-align:right;letter-spacing:0.2px;width:200px">perennial</div>
<div class="a" style="left:173px;top:580.0px;font-size:15px;color:#303030;line-height:18px;white-space:nowrap;text-align:right;letter-spacing:0.2px;width:200px">Azalea<br>Lake</div>
<div class="a" style="left:264px;top:580.0px;font-size:15px;color:#303030;line-height:18px;white-space:nowrap;text-align:right;letter-spacing:0.2px;width:200px">Azalea<br>Lake</div>
<div class="a" style="left:353px;top:589.0px;font-size:15px;color:#303030;line-height:18px;white-space:nowrap;text-align:right;letter-spacing:0.2px;width:200px">256390.0</div>
<div class="a" style="left:424px;top:589.0px;font-size:15px;color:#303030;line-height:18px;white-space:nowrap;text-align:right;letter-spacing:0.2px;width:200px">Siskiyou</div>
<div class="a" style="left:545px;top:580.0px;font-size:14px;color:#303030;line-height:18px;white-space:nowrap;text-align:right;letter-spacing:0.3px;width:200px">FIGUREHEAD<br>MTN.</div>
<div class="a" style="left:636px;top:589.0px;font-size:15px;color:#303030;line-height:18px;white-space:nowrap;text-align:right;letter-spacing:0.2px;width:200px">41123H3</div>
<div class="a" style="left:725px;top:589.0px;font-size:15px;color:#303030;line-height:18px;white-space:nowrap;text-align:right;letter-spacing:0.2px;width:200px">41.969883</div>
<div class="a" style="left:829px;top:589.0px;font-size:15px;color:#303030;line-height:18px;white-space:nowrap;text-align:right;letter-spacing:0.2px;width:200px">-123.300531</div>
<div class="a" style="left:913px;top:589.0px;font-size:15px;color:#303030;line-height:18px;white-space:nowrap;text-align:right;letter-spacing:0.2px;width:200px">10.0</div>
<div class="a" style="left:1028px;top:589.0px;font-size:15px;color:#303030;line-height:18px;white-space:nowrap;text-align:right;letter-spacing:0.2px;width:200px">4.646476e+06</div>
<div class="a" style="left:1244px;top:589px;font-size:15px;color:#222;line-height:18px;white-space:nowrap;text-align:left;letter-spacing:0.2px">475090.0</div>
<div class="a" style="left:128px;top:676px;font-size:15px;font-weight:bold;color:#222;line-height:18px">2</div>
<div class="a" style="left:29px;top:676.0px;font-size:15px;color:#303030;line-height:18px;white-space:nowrap;text-align:right;letter-spacing:0.2px;width:200px">9</div>
<div class="a" style="left:108px;top:676.0px;font-size:15px;color:#303030;line-height:18px;white-space:nowrap;text-align:right;letter-spacing:0.2px;width:200px">None</div>
<div class="a" style="left:173px;top:667.0px;font-size:15px;color:#303030;line-height:18px;white-space:nowrap;text-align:right;letter-spacing:0.2px;width:200px">White<br>Lake</div>
<div class="a" style="left:264px;top:676.0px;font-size:15px;color:#303030;line-height:18px;white-space:nowrap;text-align:right;letter-spacing:0.2px;width:200px">White Lake</div>
<div class="a" style="left:353px;top:676.0px;font-size:15px;color:#303030;line-height:18px;white-space:nowrap;text-align:right;letter-spacing:0.2px;width:200px">269006.0</div>
<div class="a" style="left:424px;top:676.0px;font-size:15px;color:#303030;line-height:18px;white-space:nowrap;text-align:right;letter-spacing:0.2px;width:200px">Siskiyou</div>
<div class="a" style="left:545px;top:658.0px;font-size:14px;color:#303030;line-height:18px;white-space:nowrap;text-align:right;letter-spacing:0.3px;width:200px">LOWER<br>KLAMATH<br>LAKE</div>
<div class="a" style="left:636px;top:676.0px;font-size:15px;color:#303030;line-height:18px;white-space:nowrap;text-align:right;letter-spacing:0.2px;width:200px">41121H6</div>
<div class="a" style="left:725px;top:676.0px;font-size:15px;color:#303030;line-height:18px;white-space:nowrap;text-align:right;letter-spacing:0.2px;width:200px">41.994778</div>
<div class="a" style="left:829px;top:676.0px;font-size:15px;color:#303030;line-height:18px;white-space:nowrap;text-align:right;letter-spacing:0.2px;width:200px">-121.633244</div>
<div class="a" style="left:913px;top:676.0px;font-size:15px;color:#303030;line-height:18px;white-space:nowrap;text-align:right;letter-spacing:0.2px;width:200px">10.0</div>
<div class="a" style="left:1028px;top:676.0px;font-size:15px;color:#303030;line-height:18px;white-space:nowrap;text-align:right;letter-spacing:0.2px;width:200px">4.650100e+06</div>
<div class="a" style="left:1244px;top:676px;font-size:15px;color:#222;line-height:18px;white-space:nowrap;text-align:left;letter-spacing:0.2px">613200.0</div>
<div class="a" style="left:128px;top:763px;font-size:15px;font-weight:bold;color:#222;line-height:18px">3</div>
<div class="a" style="left:29px;top:763.0px;font-size:15px;color:#303030;line-height:18px;white-space:nowrap;text-align:right;letter-spacing:0.2px;width:200px">35</div>
<div class="a" style="left:108px;top:763.0px;font-size:15px;color:#303030;line-height:18px;white-space:nowrap;text-align:right;letter-spacing:0.2px;width:200px">None</div>
<div class="a" style="left:173px;top:754.0px;font-size:15px;color:#303030;line-height:18px;white-space:nowrap;text-align:right;letter-spacing:0.2px;width:200px">Bear<br>Wallow</div>
<div class="a" style="left:264px;top:754.0px;font-size:15px;color:#303030;line-height:18px;white-space:nowrap;text-align:right;letter-spacing:0.2px;width:200px">Bear<br>Wallow</div>
<div class="a" style="left:353px;top:763.0px;font-size:15px;color:#303030;line-height:18px;white-space:nowrap;text-align:right;letter-spacing:0.2px;width:200px">256730.0</div>
<div class="a" style="left:424px;top:754.0px;font-size:15px;color:#303030;line-height:18px;white-space:nowrap;text-align:right;letter-spacing:0.2px;width:200px">Del<br>Norte</div>
<div class="a" style="left:545px;top:754.0px;font-size:14px;color:#303030;line-height:18px;white-space:nowrap;text-align:right;letter-spacing:0.3px;width:200px">BROKEN RIB<br>MTN.</div>
<div class="a" style="left:636px;top:763.0px;font-size:15px;color:#303030;line-height:18px;white-space:nowrap;text-align:right;letter-spacing:0.2px;width:200px">41123H6</div>
<div class="a" style="left:725px;top:763.0px;font-size:15px;color:#303030;line-height:18px;white-space:nowrap;text-align:right;letter-spacing:0.2px;width:200px">41.950329</div>
<div class="a" style="left:829px;top:763.0px;font-size:15px;color:#303030;line-height:18px;white-space:nowrap;text-align:right;letter-spacing:0.2px;width:200px">-123.654790</div>
<div class="a" style="left:913px;top:763.0px;font-size:15px;color:#303030;line-height:18px;white-space:nowrap;text-align:right;letter-spacing:0.2px;width:200px">10.0</div>
<div class="a" style="left:1028px;top:763.0px;font-size:15px;color:#303030;line-height:18px;white-space:nowrap;text-align:right;letter-spacing:0.2px;width:200px">4.644469e+06</div>
<div class="a" style="left:1244px;top:763px;font-size:15px;color:#222;line-height:18px;white-space:nowrap;text-align:left;letter-spacing:0.2px">445720.0</div>
<div class="a" style="left:128px;top:850px;font-size:15px;font-weight:bold;color:#222;line-height:18px">4</div>
<div class="a" style="left:29px;top:850.0px;font-size:15px;color:#303030;line-height:18px;white-space:nowrap;text-align:right;letter-spacing:0.2px;width:200px">39</div>
<div class="a" style="left:108px;top:850.0px;font-size:15px;color:#303030;line-height:18px;white-space:nowrap;text-align:right;letter-spacing:0.2px;width:200px">None</div>
<div class="a" style="left:173px;top:841.0px;font-size:15px;color:#303030;line-height:18px;white-space:nowrap;text-align:right;letter-spacing:0.2px;width:200px">Mud<br>Lake</div>
<div class="a" style="left:264px;top:850.0px;font-size:15px;color:#303030;line-height:18px;white-space:nowrap;text-align:right;letter-spacing:0.2px;width:200px">Mud Lake</div>
<div class="a" style="left:353px;top:850.0px;font-size:15px;color:#303030;line-height:18px;white-space:nowrap;text-align:right;letter-spacing:0.2px;width:200px">1657412.0</div>
<div class="a" style="left:424px;top:850.0px;font-size:15px;color:#303030;line-height:18px;white-space:nowrap;text-align:right;letter-spacing:0.2px;width:200px">Siskiyou</div>
<div class="a" style="left:545px;top:850.0px;font-size:14px;color:#303030;line-height:18px;white-space:nowrap;text-align:right;letter-spacing:0.3px;width:200px">DORRIS</div>
<div class="a" style="left:636px;top:850.0px;font-size:15px;color:#303030;line-height:18px;white-space:nowrap;text-align:right;letter-spacing:0.2px;width:200px">41121H8</div>
<div class="a" style="left:725px;top:850.0px;font-size:15px;color:#303030;line-height:18px;white-space:nowrap;text-align:right;letter-spacing:0.2px;width:200px">41.985547</div>
<div class="a" style="left:829px;top:850.0px;font-size:15px;color:#303030;line-height:18px;white-space:nowrap;text-align:right;letter-spacing:0.2px;width:200px">-121.983720</div>
<div class="a" style="left:913px;top:850.0px;font-size:15px;color:#303030;line-height:18px;white-space:nowrap;text-align:right;letter-spacing:0.2px;width:200px">10.0</div>
<div class="a" style="left:1028px;top:850.0px;font-size:15px;color:#303030;line-height:18px;white-space:nowrap;text-align:right;letter-spacing:0.2px;width:200px">4.648671e+06</div>
<div class="a" style="left:1244px;top:850px;font-size:15px;color:#222;line-height:18px;white-space:nowrap;text-align:left;letter-spacing:0.2px">584180.0</div></div></div>
<div class="a" style="left:1325px;top:76px;width:18px;height:862px;background:linear-gradient(90deg,#fdfdfd,#f0f0f0)"></div>
<div class="a" style="left:1327px;top:387px;width:14px;height:53px;background:#c1c1c1"></div>
<div class="a" style="left:1329px;top:82px;"><svg width="10" height="6"><path d="M0 5.5L5 0.5L10 5.5Z" fill="#505050"/></svg></div>
<div class="a" style="left:1329px;top:925px;"><svg width="10" height="6"><path d="M0 0.5L5 5.5L10 0.5Z" fill="#505050"/></svg></div>
<div class="a" style="left:884px;top:361px"><svg width="8" height="17" viewBox="0 0 8 17"><path d="M0.5 0.7H2.6C3.6 0.7 4 1.3 4 2.3V14.2C4 15.2 3.6 15.8 2.6 15.8H0.5M7.5 0.7H5.4C4.4 0.7 4 1.3 4 2.3M4 14.2C4 15.2 4.4 15.8 5.4 15.8H7.5" stroke="#000" stroke-width="1.4" fill="none"/></svg></div>
</div>
<div id="rightbar" class="a" style="left:1880px;top:105px;width:40px;height:945px;background:#efedf8">
 <div class="a" style="left:9px;top:22px"><svg width="22" height="22" viewBox="0 0 22 22"><g fill="#56555d"><path d="M7 1.5l1 .2.3 1.3.9.5 1.2-.5.8.7-.5 1.2.5.9 1.3.3.2 1-.2 1-1.3.3-.5.9.5 1.2-.8.7-1.2-.5-.9.5-.3 1.3-1 .2-1-.2-.3-1.3-.9-.5-1.2.5-.7-.7.5-1.2-.5-.9L.7 8.2.5 7.2l.2-1 1.3-.3.5-.9-.5-1.2.7-.7 1.2.5.9-.5.3-1.3z"/><path d="M15 8l1.2.2.4 1.6 1.1.6 1.5-.6 1 .9-.6 1.5.6 1.1 1.6.4.2 1.2-.2 1.2-1.6.4-.6 1.1.6 1.5-1 .9-1.5-.6-1.1.6-.4 1.6-1.2.2-1.2-.2-.4-1.6-1.1-.6-1.5.6-.9-.9.6-1.5-.6-1.1-1.6-.4-.2-1.2.2-1.2 1.6-.4.6-1.1-.6-1.5.9-.9 1.5.6 1.1-.6.4-1.6z"/></g><circle cx="7.2" cy="7.2" r="1.8" fill="#efedf8"/><circle cx="15" cy="15" r="2.3" fill="#efedf8"/></svg></div>
 <div class="a" style="left:10px;top:89px"><svg width="20" height="20" viewBox="0 0 17 17"><ellipse cx="8.5" cy="9.8" rx="5.6" ry="6" fill="#56555d"/><path d="M5.5 1.5L7 4M11.5 1.5L10 4" stroke="#56555d" stroke-width="1.8"/><path d="M1.5 7H4M15.5 7H13M1.5 10.5H4M15.5 10.5H13M2 14L4.2 13M15 14L12.8 13" stroke="#56555d" stroke-width="1.8"/><path d="M6.3 8.8H10.7M6.3 11.8H10.7" stroke="#efedf8" stroke-width="1.3"/></svg></div>
</div>
<div id="statusbar" class="a" style="left:0;top:1049px;width:1920px;height:29px;background:#efedf8">
<div class="a" style="left:35px;top:8px;font-size:16px;color:#222;line-height:18px;white-space:nowrap">Simple</div>
<div class="a" style="left:91px;top:7px;width:43px;height:18px;border-radius:9px;background:#c3c2d0"></div>
<div class="a" style="left:94.5px;top:10px;width:12px;height:12px;border-radius:6px;background:#f4f4f8"></div>
<div class="a" style="left:168px;top:8px;font-size:16px;color:#222;line-height:18px;white-space:nowrap">1</div>
<div class="a" style="left:191px;top:7px"><svg width="19" height="18" viewBox="0 0 19 18"><rect x="0" y="0" width="19" height="18" fill="#3d3d45"/><text x="2.5" y="14" font-family="Liberation Sans" font-size="11" fill="#e8e8e8" font-weight="bold">$_</text></svg></div>
<div class="a" style="left:223px;top:8px;font-size:16px;color:#222;line-height:18px;white-space:nowrap">1</div>
<div class="a" style="left:245px;top:7px"><svg width="17" height="17" viewBox="0 0 17 17"><rect x="3" y="3" width="11" height="11" stroke="#56555d" stroke-width="1.6" fill="none"/><rect x="6" y="6" width="5" height="5" fill="#56555d"/><path d="M6 0.5V3M8.5 0.5V3M11 0.5V3M6 14V16.5M8.5 14V16.5M11 14V16.5M0.5 6H3M0.5 8.5H3M0.5 11H3M14 6H16.5M14 8.5H16.5M14 11H16.5" stroke="#56555d" stroke-width="1.3"/></svg></div>
<div class="a" style="left:288px;top:4px"><svg width="23" height="23" viewBox="0 0 24 24"><path d="M12 1L23 12L12 23L1 12Z" fill="#56555d" stroke="#56555d" stroke-width="1.5" stroke-linejoin="round"/><path d="M9 6L15.5 12.5" stroke="#efedf8" stroke-width="1.6"/><path d="M12 9.5V17" stroke="#efedf8" stroke-width="1.6"/><circle cx="12" cy="9" r="1.8" fill="#efedf8"/><circle cx="12" cy="17" r="1.8" fill="#efedf8"/><circle cx="15.8" cy="12.8" r="1.8" fill="#efedf8"/></svg></div>
<div class="a" style="left:331px;top:8px;font-size:16px;color:#222;line-height:18px;white-space:nowrap">No Kernel | Idle</div>
<div class="a" style="left:464px;top:8px;font-size:16px;color:#222;line-height:18px;white-space:nowrap;letter-spacing:1px">Runtime remaining: 11 h 31 m</div>
<div class="a" style="left:1011px;top:8px;font-size:16px;color:#222;line-height:18px;white-space:nowrap">Saving started</div>
<div class="a" style="left:1423px;top:8px;font-size:16px;color:#222;line-height:18px;white-space:nowrap">Mode: Command</div>
<div class="a" style="left:1571px;top:8px"><svg width="19" height="16" viewBox="0 0 19 16"><path d="M9.5 0.8L17 3.3V8C17 11.5 13.5 14.2 9.5 15.2 5.5 14.2 2 11.5 2 8V3.3Z" stroke="#4a4a52" stroke-width="1.8" fill="none"/><path d="M7 5.5L12 10.5M12 5.5L7 10.5" stroke="#4a4a52" stroke-width="1.8"/></svg></div>
<div class="a" style="left:1613px;top:8px;font-size:16px;color:#222;line-height:18px;white-space:nowrap">Ln 1, Col 1</div>
<div class="a" style="left:1711px;top:8px;font-size:16px;color:#222;line-height:18px;white-space:nowrap;letter-spacing:0.15px">geospatial_analysis.ipynb</div>
</div>
<div id="bottomline" class="a"></div>
</body></html>
